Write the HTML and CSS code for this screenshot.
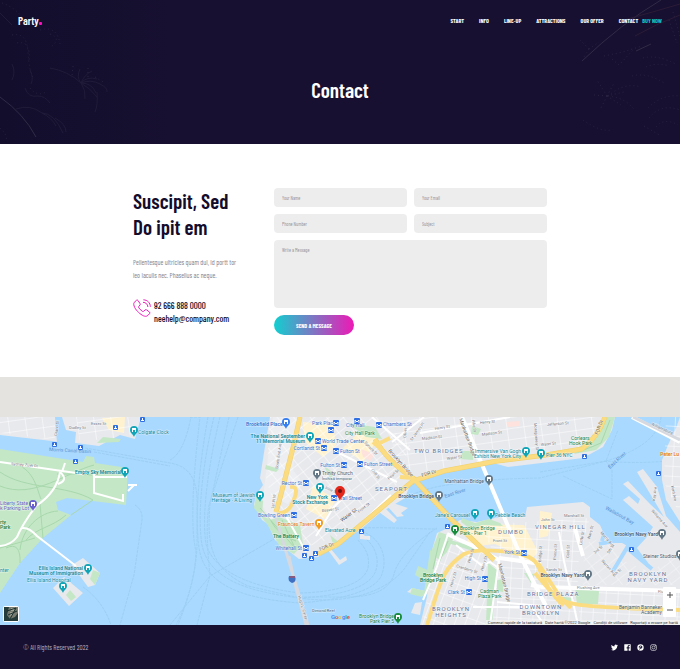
FILE: index.html
```html
<!DOCTYPE html>
<html lang="en">
<head>
<meta charset="utf-8">
<meta name="viewport" content="width=device-width, initial-scale=1">
<title>Party. Contact</title>
<link rel="stylesheet" href="styles.css">
</head>
<body>
<header class="hero">
  <svg class="sparks sparks-left" viewBox="0 0 110 144" aria-hidden="true">
    <path d="M0 97Q24 114 36 137"/>
    <g class="faint">
      <path d="M50 68Q68 71 81 83M81 83Q84 75 92 71M81 83Q87 76 97 79M81 83Q91 79 100 84M81 83Q92 83 96 93M81 83Q90 88 97 97M81 83Q86 90 85 99M81 83Q76 77 80 69M100 84Q108 88 107 92M97 92Q98 105 95 112"/>
      <path d="M16 109Q30 104 42 113Q52 118 56 126M42 113Q54 113 63 133M25 88Q28 98 38 96Q45 96 50 103M12 64Q16 72 12 80M0 13L12 25M55 118Q66 124 66 132M30 70Q34 78 31 84"/>
      <path class="dots" d="M12 35Q27 32 28 52T34 79M17 43Q31 40 29 61M40 30Q57 25 60 44M50 34Q62 38 51 47M2 3Q14 7 22 17M0 128Q8 135 6 142M30 88Q37 97 46 92M73 66L72 76M88 68L88 78M95 77L105 83"/>
    </g>
  </svg>
  <svg class="sparks sparks-right" viewBox="0 0 110 144" aria-hidden="true">
    <path d="M12 61Q52 23 91 0M66 51L81 44"/>
    <g class="warm">
      <path d="M54 20Q83 12 110 4M65 36Q86 24 110 15"/>
    </g>
    <g class="faint">
      <path class="dots" d="M37 96L27 80M37 96L44 83M37 96L54 92M37 96L51 105M37 96L30 110M37 96L24 95M19 49L10 40M19 49L29 42M19 49L14 57M78 108Q92 94 110 96M79 118Q91 103 110 110M86 127Q94 117 108 125"/>
      <path class="dots" d="M34 56L53 52L72 46M42 59L49 65L64 49M103 12L110 36M99 20L107 43M76 67Q87 62 99 66M38 96Q54 82 71 87M38 96Q57 98 65 111M13 120Q30 132 41 130M62 76Q77 72 94 83M73 58Q88 54 107 65M74 126L91 136"/>
    </g>
  </svg>
  <div class="topbar">
    <a class="logo" href="#">Party<span class="logo-dot"></span></a>
    <nav class="nav" aria-label="Main">
      <a href="#">START</a>
      <a href="#">INFO</a>
      <a href="#">LINE-UP</a>
      <a href="#">ATTRACTIONS</a>
      <a href="#">OUR OFFER</a>
      <a href="#">CONTACT</a>
      <a class="buy" href="#">BUY NOW</a>
    </nav>
  </div>
  <h1>Contact</h1>
</header>

<main>
  <section class="contact">
    <div class="intro">
      <h2>Suscipit, Sed<br>Do ipit em</h2>
      <p class="lead">Pellentesque ultricies quam dui, id portt tor<br>leo iaculis nec. Phasellus ac neque.</p>
      <div class="reach">
        <svg class="phone" viewBox="0 0 18 18" aria-hidden="true">
          <path d="M3.6 1.2L1.2 3.4C-.4 6 2.6 10.8 5.6 13.4C8.8 16.4 12.3 18.2 14.4 16.8L16.6 14.6Q17.2 13.8 16.4 13L13.5 10.8Q12.8 10.3 12 11L10.6 12.3Q9.8 12.8 8.8 12L6 9.1Q5.2 8.1 5.8 7.4L7 6Q7.5 5.3 7 4.6L5 1.5Q4.4.7 3.6 1.2Z"/>
          <path d="M10.4.8C14.6 1 17.2 3.7 17.4 7.8M10 3.3C12.9 3.4 14.7 5.2 14.9 8"/>
        </svg>
        <div class="reach-lines">
          <a href="tel:926668880000">92 666 888 0000</a>
          <a href="mailto:neehelp@company.com">neehelp@company.com</a>
        </div>
      </div>
    </div>
    <form class="form">
      <input type="text" aria-label="Your Name" placeholder="Your Name">
      <input type="email" aria-label="Your Email" placeholder="Your Email">
      <input type="tel" aria-label="Phone Number" placeholder="Phone Number">
      <input type="text" aria-label="Subject" placeholder="Subject">
      <textarea aria-label="Write a Message" placeholder="Write a Message"></textarea>
      <button class="send" type="button">SEND A MESSAGE</button>
    </form>
  </section>

  <section class="map" aria-label="Map">
    <svg class="map-art" viewBox="0 417 680 208">
      <defs>
        <pattern id="grid-m" width="13" height="9" patternUnits="userSpaceOnUse" patternTransform="rotate(-38)"><path class="street" d="M0 0H13M0 0V9"/></pattern>
        <pattern id="grid-n" width="17" height="11" patternUnits="userSpaceOnUse" patternTransform="rotate(-8)"><path class="street" d="M0 0H17M0 0V11"/></pattern>
        <pattern id="grid-b" width="10" height="14" patternUnits="userSpaceOnUse" patternTransform="rotate(20)"><path class="street" d="M0 0H10M0 0V14"/></pattern>
        <pattern id="grid-w" width="12" height="10" patternUnits="userSpaceOnUse" patternTransform="rotate(3)"><path class="street" d="M0 0H12M0 0V10"/></pattern>
        <g id="pin"><path d="M0 0C-1-3-4-4-4-7A4 4 0 1 1 4-7C4-4 1-3 0 0Z"/><path fill="#fff" d="M-2-9H2V-5H1V-7H-1V-5H-2Z"/></g>
        <g id="stop"><rect x="-3" y="-3" width="6" height="6" rx="1" fill="#2f6fe4"/><path d="M-2 2V-1L0 1L2-1V2" fill="none" stroke="#fff"/></g>
        <g id="ferry"><rect x="-3" y="-3" width="5" height="5" rx="1" fill="#2f6fe4"/><path d="M-2 0H1V1H-2ZM-1-2H0V0H-1Z" fill="#fff"/></g>
      </defs>
      <rect y="417" width="680" height="208" fill="#a9d9ff"/>

      <g class="route">
        <path d="M208 417C198 472 195 520 199 548C205 587 246 599 300 603C340 600 377 591 382 574C390 551 373 532 360 532"/>
        <path d="M214 417C200 475 198 522 202 545C209 580 250 592 300 598C338 596 371 588 376 570C381 553 369 539 361 536"/>
        <path d="M220 417C206 475 202 520 206 544C214 573 256 588 300 593C340 592 364 583 368 568C371 552 361 544 358 540"/>
        <path d="M229 417L210 504C207 542 209 568 248 586L300 598C353 606 390 588 405 568L430 532"/>
        <path d="M238 417L209 505Q205 530 210 575L197 625"/>
        <path d="M85 448L170 463Q196 467 197 498L197 543Q197 577 178 625"/>
        <path d="M94 452L170 466M170 625L210 576L274 539M170 460Q184 453 191 417M135 505Q143 510 142 520L134 575L120 625M83 587Q103 601 111 625M190 417L200 417Q188 520 196 551Q195 588 176 625"/>
        <path d="M360 528C390 527 407 529 437 529M437 528Q400 552 394 574T350 597L300 597M405 499Q430 480 540 478L606 461Q634 464 668 461M540 472L606 461L618 430M563 476L612 499L612 470L606 461M661 417Q658 445 606 461"/>
      </g>

      <g class="land">
        <path d="M0 417H141L135 439L120 435L99 446L76 443L62 443L52 441L0 435Z"/>
        <path d="M72 565L83 558L100 573L95 585L88 587ZM53 588L64 577L83 593L69 606Z"/>
        <path d="M270 417L266 440L260 478L263 485L256 495L254 505L262 520L268 524L275 540L290 552L299 559L318 557L332 548L360 530L380 513L405 498L410 485L443 472L493 463L508 467L583 458L603 447L612 430L615 417Z"/>
        <path d="M331 549L340 560L346 556L347 560L339 565L328 550ZM360 531L365 536L370 536L370 540L360 539ZM379 512L384 507L397 520L394 523ZM393 503L408 508L401 513L404 516L397 517L388 507Z"/>
        <path d="M420 625L427 597L432 550L437 533L448 528L460 520L477 522L500 517H525L527 507L583 502L590 507V517L600 525L604 534L612 543L622 543L635 550L646 538L653 527L623 500L629 496L638 504L640 499L623 484L628 481L650 504L664 517L637 472L643 469L657 487L666 516L680 532V625Z"/>
        <path d="M680 417L676 428L668 445L662 460V480L666 500L680 522Z"/>
        <path d="M412 588L425 591L423 596L407 592ZM415 603L422 602L420 615L411 613Z"/>
      </g>
      <path d="M55 417H62L66 430L76 432L75 443H57Z" fill="#a9d9ff"/>

      <g>
        <path d="M273 417H299L293 470L303 483L288 504L276 499L272 523L263 507L264 489Z" fill="#eceef1"/>
        <path d="M303 422L333 425L336 445L323 457L305 442ZM343 448L361 430L377 440L363 462ZM313 486L336 499L325 519L306 509Z" fill="#fff3cf"/>
        <path d="M467 524L524 525L538 552L530 561L495 544L468 547ZM540 511L552 513L548 536L539 538ZM102 418L125 417L124 433L109 430Z" fill="#fff3cf"/>
        <path d="M361 449L374 454L371 461L363 457ZM506 422L520 421L520 426L507 427Z" fill="#fde2dd"/>
      </g>

      <g>
        <path fill="url(#grid-m)" d="M300 417H378L410 445L397 485L365 508L335 538L309 546L284 517L273 500L266 480L270 417Z"/>
        <path fill="url(#grid-n)" d="M390 417H613L600 437L580 452L493 460L443 470L406 474L393 448Z"/>
        <path fill="url(#grid-b)" d="M447 532L487 547L500 566L486 625H422L434 565Z"/>
        <path fill="url(#grid-w)" d="M480 525L590 518L579 553L576 625H487L500 566ZM579 589H680V625H579ZM666 417H680V515L664 482Z"/>
        <path fill="url(#grid-n)" d="M76 417H138L130 436L80 442ZM0 417H55V440L0 433Z"/>
        <path fill="url(#grid-m)" d="M584 543L606 538L622 560L650 572L680 551V585H583Z" opacity=".6"/>
      </g>

      <g class="park">
        <path d="M0 449L83 462L86 456L94 457L95 463L128 468L126 505L67 498L56 502L58 510L71 515L43 538L20 563L0 593Z"/>
        <path d="M97 443L103 437L121 439L119 442ZM93 570L100 573L95 585L90 579ZM70 590L76 597L71 601L66 595Z"/>
        <path d="M256 495L263 501L262 515L270 520L279 517L300 525L303 544L294 554L280 547L267 524L254 508ZM266 465L279 469L276 472L265 469Z"/>
        <path d="M348 423L375 427L382 439L366 437ZM324 466L335 474L330 478ZM330 535L341 544L335 549ZM472 426L481 429L478 435L471 434ZM463 451L473 451L473 460L460 459Z"/>
        <path d="M604 417H615L609 437L596 450L574 454L584 442L594 438Z"/>
        <path d="M462 518L475 523L489 519L500 523L503 526L482 525L472 530L461 522Z"/>
        <path d="M439 532L454 537L447 552L439 560L431 552ZM418 566L437 574L429 583L415 575ZM412 588L425 591L422 597L410 594ZM430 550L437 555L431 582L423 600ZM488 563L497 570L492 625H486ZM497 580L504 579L503 592L497 591ZM524 573L535 574L531 583ZM575 587L599 591L598 604L577 605ZM450 540L478 548L476 552L451 544ZM555 596L574 598L570 602L554 599Z"/>
      </g>
      <g class="park-line">
        <path d="M0 486C33 500 67 472 94 465M0 472C25 490 66 484 93 500L71 515M16 464C35 471 37 490 41 499M57 474L74 474L92 475M26 540C36 528 53 527 66 515M20 550C22 529 39 512 58 511M40 504L43 538M6 548Q21 541 20 563M0 548L35 538M260 508L295 548M271 521Q278 535 296 541M282 520Q290 538 296 550"/>
        <path d="M603 420Q597 437 585 446M610 420L601 443Q592 447 578 452M440 538L433 569M448 541L427 592"/>
      </g>

      <g class="road-white">
        <path d="M0 462L62 471L83 474M60 472Q57 492 36 506Q22 525 17 537Q11 545 0 546M22 528Q29 527 37 536L76 566M62 472L65 463M60 472Q69 480 58 484M94 474V493L123 501V494M94 477H127M85 474V470M128 485H137M128 491L134 485"/>
        <path class="wide" d="M462 417L521 557L534 583L548 610"/>
        <path class="wide" d="M447 534L473 546L499 560M499 558L541 564M541 587L680 591M531 585L541 587"/>
        <path d="M448 534L437 567L423 600M499 560L490 625M392 442L424 417M456 545L481 565L490 562L500 569M286 516L306 552M340 543L391 495M316 536L333 508L347 494M337 452L397 482M372 417L410 450M420 433L510 417M473 607H532L544 625M559 532L564 561L578 625M497 602L541 606"/>
        <path class="wide" d="M632 417L680 442M574 525L583 556"/>
      </g>

      <g class="highway-edge">
        <path d="M300 417L293 448L280 498L276 512M318 554L338 544L374 514L413 481L444 471L497 461L546 455L582 449Q598 437 605 417"/>
        <path d="M375 439Q387 461 413 478L451 519L494 560"/>
      </g>
      <g class="highway">
        <path d="M300 417L293 448L280 498L276 512M290 487Q301 485 292 504Q287 514 277 513M318 554L338 544L374 514L413 481L444 471L497 461L546 455L582 449Q598 437 605 417"/>
        <path d="M375 439Q387 461 413 478L451 519L494 560M376 445L390 438M373 442L382 450M400 477L413 478"/>
        <path d="M427 625C440 585 441 569 464 554C477 548 504 551 521 554C541 560 537 568 548 587C560 605 565 607 680 610M538 563L560 597L571 608M535 573L563 606"/>
      </g>
      <g class="bridge">
        <path d="M276 518L290 565L308 625M289 556L294 580L306 625"/>
        <path d="M633 417L680 440"/>
      </g>
      <g class="slip">
        <path d="M613 571L631 541M627 548L652 569M632 545L648 566M602 541L609 518M599 544L614 541"/>
      </g>

      <g class="label minor">
        <text transform="translate(11 465) rotate(5)">Sydney Zuyk Dr</text><text x="69" y="429">Dudley St</text><text x="91" y="425">Essex St</text><text transform="translate(57 436) rotate(-83)">Grand St</text>
        <text transform="translate(412 441) rotate(-54)">St James Pl</text><text transform="translate(435 430) rotate(-9)">Henry St</text><text transform="translate(480 424) rotate(-5)">Henry St</text><text transform="translate(472 420) rotate(82)">Pike St</text><text transform="translate(534 423) rotate(86)">Montgomery St</text><text transform="translate(482 436) rotate(-8)">Madison St</text><text transform="translate(422 440) rotate(-6)">Madison St</text><text transform="translate(547 426) rotate(-5)">Jefferson St</text><text transform="translate(447 460) rotate(-8)">Water St</text><text transform="translate(541 446) rotate(-6)">Water St</text>
        <text transform="translate(278 469) rotate(-82)">South End Ave</text><text transform="translate(274 509) rotate(-82)">1st Pl W</text><text transform="translate(342 522) rotate(-37)" class="dark">Water St</text><text transform="translate(322 512) rotate(-7)">Beaver St</text><text transform="translate(389 480) rotate(-42)">Pearl St</text><text transform="translate(364 443) rotate(46)">Spruce St</text><text transform="translate(371 470) rotate(54)">Cliff St</text><text transform="translate(359 513) rotate(-37)">Front St</text><text transform="translate(325 489) rotate(22)">Pine St</text><text transform="translate(406 438) rotate(-85)">Oliver</text>
        <text transform="translate(452 587) rotate(-72)">Henry St</text><text transform="translate(456 567) rotate(17)">Cranberry St</text><text transform="translate(470 563) rotate(-74)">Hicks St</text><text transform="translate(483 571) rotate(-73)">Henry St</text><text x="493" y="542">Front St</text><text transform="translate(541 562) rotate(-86)">Bridge St</text><text x="564" y="517">Marshall St</text><text transform="translate(582 545) rotate(-80)">Little St</text><text transform="translate(590 539) rotate(-75)">Navy St</text><text transform="translate(600 533) rotate(48)">Morris Ave</text><text transform="translate(595 554) rotate(-40)">3rd St</text><text transform="translate(609 554) rotate(-58)">5th St</text><text transform="translate(601 561) rotate(48)">Warren Ave</text><text transform="translate(614 577) rotate(-42)">6th St</text><text transform="translate(655 501) rotate(-83)">Kay Ave</text><text transform="translate(651 511) rotate(48)">Williams Ave</text><text x="546" y="571">Sands St</text><text x="577" y="589">Flushing Ave</text><text x="658" y="593">Flushing</text><text transform="translate(671 486) rotate(78)">Kent Ave</text><text transform="translate(569 558) rotate(-87)">Gold St</text><text x="541" y="521">John St</text><text transform="translate(556 560) rotate(-86)">Prince St</text>
        <text transform="translate(298 596) rotate(73)">Hugh L. Carey</text><text transform="translate(651 425) rotate(24)">Williamsburg</text>
      </g>
      <g class="label road">
        <text transform="translate(388 451) rotate(48)">Brooklyn Bridge</text><text transform="translate(459 419) rotate(70)">Manhattan Bridge</text><text transform="translate(498 564) rotate(76)">Manhattan Bridge</text>
        <text transform="translate(320 551) rotate(-22)">FDR Dr</text><text transform="translate(422 477) rotate(-16)">FDR Dr</text><text transform="translate(598 435) rotate(-70)">FDR Dr</text>
      </g>
      <g class="label area">
        <text x="375" y="491">SEAPORT</text><text x="414" y="453">TWO BRIDGES</text><text x="498" y="534">DUMBO</text><text x="535" y="529">VINEGAR HILL</text><text x="527" y="596">BRIDGE PLAZA</text>
        <text x="451" y="611" text-anchor="middle">BROOKLYN</text><text x="451" y="617" text-anchor="middle">HEIGHTS</text><text x="541" y="609" text-anchor="middle">DOWNTOWN</text><text x="541" y="615" text-anchor="middle">BROOKLYN</text><text x="648" y="576" text-anchor="middle">BROOKLYN</text><text x="648" y="582" text-anchor="middle">NAVY YARD</text>
      </g>
      <g class="label transit">
        <text x="246" y="426" class="bold">Brookfield Place</text><text x="312" y="425">Park Place</text><text x="346" y="427">City Hall</text><text x="383" y="426">Chambers St</text><text x="322" y="443">World Trade Center</text><text x="320" y="450" text-anchor="end">Cortlandt St</text><text x="340" y="453">Fulton St</text><text x="340" y="467" text-anchor="end">Fulton St</text><text x="364" y="466">Fulton Street</text><text x="302" y="485" text-anchor="end">Rector St</text><text x="338" y="500">Wall Street</text><text x="290" y="517" text-anchor="end">Bowling Green</text><text x="302" y="550" text-anchor="end">Whitehall St</text><text x="481" y="580" text-anchor="end">High St</text><text x="465" y="594" text-anchor="end">Clark St</text><text x="520" y="554" text-anchor="end">York St</text>
      </g>
      <g class="label place">
        <text x="138" y="434">Colgate Clock</text><text x="75" y="474" class="bold">Empty Sky Memorial</text><text x="83" y="570" text-anchor="end" class="bold">Ellis Island National</text><text x="83" y="575" text-anchor="end" class="bold">Museum of Immigration</text><text x="27" y="582">Ellis Island Hospital</text>
        <text x="255" y="497" text-anchor="end">Museum of Jewish</text><text x="252" y="502" text-anchor="end">Heritage - A Living</text><text x="305" y="438" text-anchor="end" class="bold">The National September</text><text x="305" y="443" text-anchor="end" class="bold">11 Memorial Museum</text><text x="328" y="499" text-anchor="end" class="bold">New York</text><text x="328" y="504" text-anchor="end" class="bold">Stock Exchange</text><text x="325" y="532">Elevated Acre</text>
        <text x="521" y="453" text-anchor="end">Immersive Van Gogh</text><text x="521" y="458" text-anchor="end">Exhibit New York City</text><text x="546" y="457">Pier 36 NYC</text><text x="470" y="517" text-anchor="end">Jane's Carousel</text><text x="495" y="517">Pebble Beach</text><text x="0" y="572">nter</text>
      </g>
      <g class="label green">
        <text x="571" y="440">Corlears</text><text x="569" y="445">Hook Park</text><text x="345" y="435">City Hall Park</text><text x="273" y="538" class="bold">The Battery</text><text x="460" y="530">Brooklyn Bridge</text><text x="460" y="535">Park - Pier 1</text><text x="423" y="577" class="bold">Brooklyn</text><text x="420" y="582" class="bold">Bridge Park</text><text x="480" y="593">Cadman</text><text x="478" y="598">Plaza Park</text><text x="394" y="618" text-anchor="end">Brooklyn Bridge</text><text x="394" y="623" text-anchor="end">Park Pier 5</text><text x="0" y="524" class="bold">rty</text><text x="0" y="529" class="bold">Park</text>
      </g>
      <g class="label civic">
        <text x="322" y="475">Trinity Church</text><text x="322" y="480" class="small">Închisă temporar</text><text x="484" y="483" text-anchor="end">Manhattan Bridge</text><text x="434" y="498" text-anchor="end" class="bold">Brooklyn Bridge</text><text x="658" y="536" text-anchor="end" class="bold">Brooklyn Navy Yard</text><text x="584" y="577" text-anchor="end" class="bold">Brooklyn Navy Yard</text><text x="643" y="558">Steiner Studios</text><text x="619" y="609">Benjamin Banneker</text><text x="641" y="614">Academy</text><text x="312" y="612" class="small">Dimond Reef</text>
      </g>
      <g class="label lot"><text x="0" y="505">Liberty State</text><text x="0" y="510">k Parking Lot</text></g>
      <g class="label food"><text x="679" y="456" text-anchor="end" class="bold">Peter Lu</text></g>
      <g class="label food"><text x="278" y="526">Fraunces Tavern</text></g>
      <g class="label sea"><text transform="translate(49 451) rotate(3)">Morris Canal Basin</text><text transform="translate(445 498) rotate(-18)">East River</text><text transform="translate(610 469) rotate(-43)">East River</text><text transform="translate(605 509) rotate(29)">Wallabout Bay</text></g>
      <text x="331" y="619" class="google"><tspan fill="#4285f4">G</tspan><tspan fill="#ea4335">o</tspan><tspan fill="#fbbc05">o</tspan><tspan fill="#4285f4">g</tspan><tspan fill="#34a853">l</tspan><tspan fill="#ea4335">e</tspan></text>

      <g fill="#12a5b7"><use href="#pin" x="134" y="437"/><use href="#pin" x="125" y="478"/><use href="#pin" x="88" y="575"/><use href="#pin" x="63" y="593"/><use href="#pin" x="260" y="502"/><use href="#pin" x="310" y="443"/><use href="#pin" x="320" y="494"/><use href="#pin" x="526" y="458"/><use href="#pin" x="541" y="460"/><use href="#pin" x="475" y="520"/><use href="#pin" x="491" y="520"/></g>
      <g fill="#647786"><use href="#pin" x="317" y="480"/><use href="#pin" x="489" y="486"/><use href="#pin" x="439" y="502"/><use href="#pin" x="662" y="540"/><use href="#pin" x="588" y="581"/><use href="#pin" x="680" y="561"/></g>
      <use href="#pin" x="286" y="429" fill="#397ff0"/><use href="#pin" x="33" y="511" fill="#6a60cf"/><use href="#pin" x="319" y="530" fill="#f49a1c"/><use href="#pin" x="455" y="536" fill="#188c3c"/><use href="#pin" x="398" y="624" fill="#188c3c"/>
      <use href="#stop" x="336" y="423"/><use href="#stop" x="357" y="421"/><use href="#stop" x="379" y="425"/><use href="#stop" x="331" y="430"/><use href="#stop" x="318" y="441"/><use href="#stop" x="324" y="448"/><use href="#stop" x="336" y="451"/><use href="#stop" x="344" y="465"/><use href="#stop" x="360" y="464"/><use href="#stop" x="306" y="483"/><use href="#stop" x="334" y="498"/><use href="#stop" x="294" y="515"/><use href="#stop" x="306" y="548"/><use href="#stop" x="485" y="579"/><use href="#stop" x="469" y="592"/><use href="#stop" x="524" y="553"/>
      <use href="#ferry" x="143" y="420"/><use href="#ferry" x="116" y="428"/><use href="#ferry" x="55" y="445"/><use href="#ferry" x="81" y="448"/><use href="#ferry" x="76" y="462"/><use href="#ferry" x="362" y="532"/><use href="#ferry" x="305" y="556"/><use href="#ferry" x="312" y="559"/><use href="#ferry" x="316" y="554"/><use href="#ferry" x="448" y="527"/><use href="#ferry" x="585" y="457"/><use href="#ferry" x="659" y="474"/><use href="#ferry" x="632" y="550"/>
      <path d="M289 576H295Q297 582 292 583Q287 581 289 576Z" fill="#3f6fc0"/><path d="M289 577H295" stroke="#cf4842"/>
      <path d="M340 501C339 496 335 496 335 491A5 5 0 0 1 345 491C345 496 341 496 340 501Z" fill="#e4271b"/><circle cx="340" cy="491" r="2" fill="#6d1010"/>
    </svg>
    <button class="satellite" type="button" aria-label="Satellite view">
      <svg viewBox="0 0 14 14" aria-hidden="true"><path fill="#263c3a" d="M0 0H14V14H0Z"/><path fill="#777b70" d="M5 0H14V6L11 10L6 12L3 8Z"/><path fill="#a0a294" d="M7 1H10V4H7ZM6 5H9V8L6 9Z"/><path stroke="#1a302d" d="M3 4L12 1M4 8L13 4M6 12L12 1" fill="none"/></svg>
    </button>
    <div class="zoom">
      <button type="button" aria-label="Zoom in"><svg viewBox="0 0 8 8" aria-hidden="true"><path d="M1 4H7M4 1V7"/></svg></button>
      <button type="button" aria-label="Zoom out"><svg viewBox="0 0 8 8" aria-hidden="true"><path d="M1 4H7"/></svg></button>
    </div>
    <div class="credits"><span>Comenzi rapide de la tastatură</span><span>Date hartă ©2022 Google</span><span>Condiții de utilizare</span><span>Raportați o eroare pe hartă</span></div>
  </section>
</main>

<footer class="footer">
  <p>© All Rights Reserved 2022</p>
  <div class="social">
    <a href="#" aria-label="Twitter"><svg viewBox="0 0 24 24"><path d="M24 4.6a10 10 0 0 1-2.8.8 5 5 0 0 0 2.1-2.7 10 10 0 0 1-3.1 1.2 4.9 4.9 0 0 0-8.4 4.5A14 14 0 0 1 1.7 3.2a4.9 4.9 0 0 0 1.5 6.5 5 5 0 0 1-2.2-.6 4.9 4.9 0 0 0 3.9 4.9 5 5 0 0 1-2.2.1 4.9 4.9 0 0 0 4.6 3.4A9.9 9.9 0 0 1 0 19.5 14 14 0 0 0 21.5 7.1 10 10 0 0 0 24 4.6Z"/></svg></a>
    <a href="#" aria-label="Facebook"><svg viewBox="0 0 24 24"><path d="M2 1H22Q23 1 23 2V22Q23 23 22 23H16V15H19L19.500 11H16V9Q16 7 18 7H20V4Q12 2 12 9V11H9V15H12V23H2Q1 23 1 22V2Q1 1 2 1Z"/></svg></a>
    <a href="#" aria-label="Pinterest"><svg viewBox="0 0 24 24"><path fill-rule="evenodd" d="M12 1A11 11 0 1 0 12 23A11 11 0 1 0 12 1ZM12.500 5C17 5 19 8 18 12C17 16 13 17 11.500 15L10 20H8L10.500 10H13L12 13C14 14 16 8 12.500 8C9 8 8 11 9 13L7 14C4 9 8 5 12.500 5Z"/></svg></a>
    <a href="#" aria-label="Instagram"><svg viewBox="0 0 24 24"><g fill="none" stroke="#fff" stroke-width="2"><rect x="2" y="2" width="20" height="20" rx="6"/><circle cx="12" cy="12" r="5"/></g><circle cx="18" cy="6" r="2"/></svg></a>
  </div>
</footer>
</body>
</html>
```
FILE: styles.css
```css
* { box-sizing: border-box; }

body {
  margin: 0;
  background: #fff;
  color: #130c2b;
  font-family: "Barlow Condensed", "Liberation Sans Narrow", "Roboto Condensed", "Liberation Sans", sans-serif;
}

a { color: inherit; text-decoration: none; }
h1, h2, p { margin: 0; }
button, input, textarea { font: inherit; border: 0; margin: 0; }

.hero {
  position: relative;
  padding: 12px 18px 40px;
  background: linear-gradient(90deg, #120e2c, #171030 25%);
  color: #fff;
}
.sparks {
  position: absolute;
  top: 0;
  height: 100%;
  fill: none;
  stroke: #312b46;
}
.sparks-left { left: 0; }
.sparks-right { right: 0; }
.sparks .faint { stroke: #201b38; }
.sparks .warm { stroke: #2c1c37; }
.sparks .dots { stroke: #2a2442; stroke-dasharray: 1 3; }

.topbar {
  position: relative;
  display: flex;
  align-items: center;
  justify-content: space-between;
  height: 18px;
}
.logo {
  display: flex;
  align-items: baseline;
  font-size: 11px;
  line-height: 16px;
  font-weight: 600;
}
.logo-dot { width: 3px; height: 3px; border-radius: 1px; background: #ff10c0; }
.nav {
  display: flex;
  gap: 15px;
  font-size: 6px;
  line-height: 8px;
  font-weight: 700;
}
.nav .buy { margin-left: -11px; color: #13c4c7; }
.hero h1 {
  position: relative;
  margin-top: 46px;
  font-size: 21px;
  line-height: 28px;
  font-weight: 600;
  text-align: center;
}

.contact {
  display: grid;
  grid-template-columns: 115fr 273fr;
  gap: 26px;
  max-width: 414px;
  margin: 0 auto;
  padding: 44px 0 42px;
}
.intro h2 {
  font-size: 21px;
  line-height: 26px;
  font-weight: 600;
  white-space: nowrap;
}
.lead {
  margin-top: 16px;
  color: #85858f;
  font-size: 7px;
  line-height: 13px;
  white-space: nowrap;
}
.reach {
  display: flex;
  gap: 3px;
  align-items: flex-start;
  margin-top: 17px;
}
.phone { width: 18px; height: 18px; fill: none; stroke: #e91db9; }
.reach-lines {
  display: flex;
  flex-direction: column;
  font-size: 9px;
  line-height: 13px;
  font-weight: 500;
}

.form {
  display: grid;
  grid-template-columns: 1fr 1fr;
  gap: 7px;
  align-content: start;
  font-size: 5px;
}
.form input, .form textarea {
  width: 100%;
  min-width: 0;
  height: 19px;
  padding: 0 8px;
  border-radius: 4px;
  background: #ededed;
  color: #55555f;
}
.form textarea {
  grid-column: 1 / -1;
  height: 68px;
  padding-top: 7px;
  resize: none;
}
.form ::placeholder { color: #92929a; opacity: 1; }
.form .send {
  justify-self: start;
  width: 80px;
  height: 20px;
  padding: 0;
  border-radius: 10px;
  background: linear-gradient(90deg, #12cfd0, #ee19b5);
  color: #fff;
  font-size: 6px;
  font-weight: 700;
}

.map {
  position: relative;
  padding-top: 40px;
  background: #e4e3df;
}
.map-art { display: block; width: 100%; }
.street { fill: none; stroke: #fff; }
.land { fill: #e8e9ed; }
.park { fill: #c4e7c6; }
.park-line { fill: none; stroke: #a8d8ac; }
.route { fill: none; stroke: #98caef; stroke-dasharray: 3 1; opacity: .7; }
.road-white { fill: none; stroke: #fff; stroke-width: 2px; }
.road-white .wide { stroke-width: 4px; }
.highway-edge { fill: none; stroke: #efd06f; stroke-width: 5px; }
.highway { fill: none; stroke: #fbdc80; stroke-width: 4px; }
.bridge { fill: none; stroke: #d6d9df; stroke-width: 3px; }
.slip { fill: none; stroke: #a9d9ff; stroke-width: 4px; }

.label {
  font-family: Roboto, "Liberation Sans", sans-serif;
  font-size: 5px;
  paint-order: stroke;
  stroke: #ffffff80;
  stroke-width: 1px;
}
.label .bold { font-weight: 600; }
.label .small, .minor { font-size: 4px; }
.minor { fill: #777a80; }
.minor .dark { fill: #444; font-size: 5px; }
.road { fill: #6a6459; }
.area { fill: #63759b; font-size: 6px; letter-spacing: 1px; }
.transit { fill: #3d74cb; }
.place { fill: #138797; }
.green { fill: #238449; }
.civic { fill: #4b5c6b; }
.lot { fill: #6362be; }
.food { fill: #e47918; }
.sea { fill: #5a8fd0; stroke: none; }
.google { font: 500 6px Roboto, sans-serif; }

.satellite {
  position: absolute;
  left: 3px;
  bottom: 3px;
  width: 16px;
  height: 16px;
  padding: 1px;
  border-radius: 2px;
  background: #fff;
}
.satellite svg { display: block; width: 14px; height: 14px; }
.zoom {
  position: absolute;
  right: 4px;
  bottom: 8px;
  display: grid;
  border-radius: 1px;
  background: #fff;
}
.zoom button {
  display: grid;
  place-items: center;
  width: 13px;
  height: 15px;
  padding: 0;
  background: none;
}
.zoom svg { width: 8px; height: 8px; stroke: #555; }
.credits {
  position: absolute;
  right: 0;
  bottom: 0;
  display: flex;
  gap: 3px;
  padding: 0 2px;
  background: #f5f5f5cc;
  color: #333;
  font: 4px/5px Roboto, sans-serif;
}

.footer {
  display: flex;
  align-items: center;
  justify-content: space-between;
  min-height: 44px;
  padding: 0 23px;
  background: #171030;
  color: #b0acbf;
  font-size: 7px;
}
.social { display: flex; gap: 6px; }
.social svg { display: block; width: 7px; height: 7px; fill: #fff; }
```
